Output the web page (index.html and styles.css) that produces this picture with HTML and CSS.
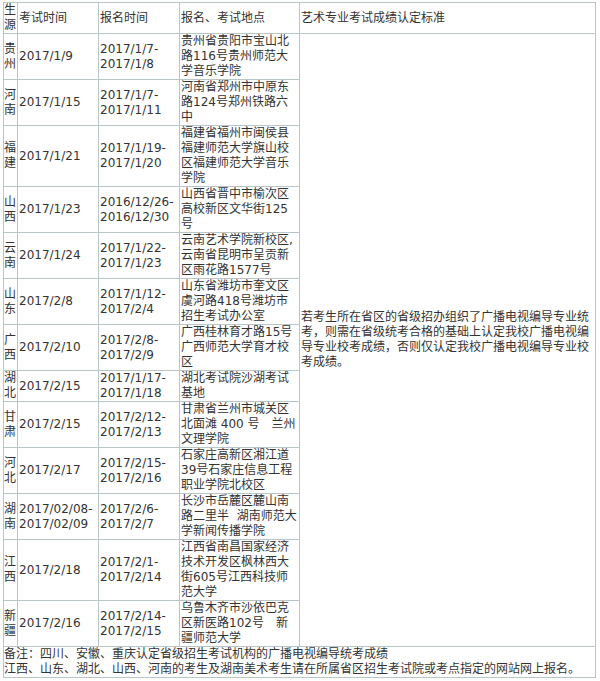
FILE: index.html
```html
<!DOCTYPE html>
<html lang="zh-CN">
<head>
    <meta charset="UTF-8">
    <title>广播电视编导专业考试安排</title>
    <link rel="stylesheet" href="styles.css">
</head>
<body>
<table class="exam-table">
    <colgroup>
        <col class="col-prov">
        <col class="col-date">
        <col class="col-apply">
        <col class="col-place">
        <col class="col-rule">
    </colgroup>
    <thead>
    <tr>
        <th>生源</th>
        <th>考试时间</th>
        <th>报名时间</th>
        <th>报名、考试地点</th>
        <th>艺术专业考试成绩认定标准</th>
    </tr>
    </thead>
    <tbody>
    <tr>
        <td>贵州</td>
        <td>2017/1/9</td>
        <td>2017/1/7-<wbr>2017/1/8</td>
        <td>贵州省贵阳市宝山北路116号贵州师范大学音乐学院</td>
        <td rowspan="13" class="rule">若考生所在省区的省级招办组织了广播电视编导专业统考，则需在省级统考合格的基础上认定我校广播电视编导专业校考成绩，否则仅认定我校广播电视编导专业校考成绩。</td>
    </tr>
    <tr>
        <td>河南</td>
        <td>2017/1/15</td>
        <td>2017/1/7-<wbr>2017/1/11</td>
        <td>河南省郑州市中原东路124号郑州铁路六中</td>
    </tr>
    <tr>
        <td>福建</td>
        <td>2017/1/21</td>
        <td>2017/1/19-<wbr>2017/1/20</td>
        <td>福建省福州市闽侯县福建师范大学旗山校区福建师范大学音乐学院</td>
    </tr>
    <tr>
        <td>山西</td>
        <td>2017/1/23</td>
        <td>2016/12/26-<wbr>2016/12/30</td>
        <td>山西省晋中市榆次区高校新区文华街125号</td>
    </tr>
    <tr>
        <td>云南</td>
        <td>2017/1/24</td>
        <td>2017/1/22-<wbr>2017/1/23</td>
        <td>云南艺术学院新校区,云南省昆明市呈贡新区雨花路1577号</td>
    </tr>
    <tr>
        <td>山东</td>
        <td>2017/2/8</td>
        <td>2017/1/12-<wbr>2017/2/4</td>
        <td>山东省潍坊市奎文区虞河路418号潍坊市招生考试办公室</td>
    </tr>
    <tr>
        <td>广西</td>
        <td>2017/2/10</td>
        <td>2017/2/8-<wbr>2017/2/9</td>
        <td>广西桂林育才路15号广西师范大学育才校区</td>
    </tr>
    <tr>
        <td>湖北</td>
        <td>2017/2/15</td>
        <td>2017/1/17-<wbr>2017/1/18</td>
        <td>湖北考试院沙湖考试基地</td>
    </tr>
    <tr>
        <td>甘肃</td>
        <td>2017/2/15</td>
        <td>2017/2/12-<wbr>2017/2/13</td>
        <td>甘肃省兰州市城关区北面滩 400 号　兰州文理学院</td>
    </tr>
    <tr>
        <td>河北</td>
        <td>2017/2/17</td>
        <td>2017/2/15-<wbr>2017/2/16</td>
        <td>石家庄高新区湘江道39号石家庄信息工程职业学院北校区</td>
    </tr>
    <tr>
        <td>湖南</td>
        <td>2017/02/08-<wbr>2017/02/09</td>
        <td>2017/2/6-<wbr>2017/2/7</td>
        <td>长沙市岳麓区麓山南路二里半&nbsp;&nbsp;湖南师范大学新闻传播学院</td>
    </tr>
    <tr>
        <td>江西</td>
        <td>2017/2/18</td>
        <td>2017/2/1-<wbr>2017/2/14</td>
        <td>江西省南昌国家经济技术开发区枫林西大街605号江西科技师范大学</td>
    </tr>
    <tr>
        <td>新疆</td>
        <td>2017/2/16</td>
        <td>2017/2/14-<wbr>2017/2/15</td>
        <td>乌鲁木齐市沙依巴克区新医路102号　新疆师范大学</td>
    </tr>
    </tbody>
    <tfoot>
    <tr>
        <td colspan="5">备注：四川、安徽、重庆认定省级招生考试机构的广播电视编导统考成绩<br>江西、山东、湖北、山西、河南的考生及湖南美术考生请在所属省区招生考试院或考点指定的网站网上报名。</td>
    </tr>
    </tfoot>
</table>
</body>
</html>
```

FILE: styles.css
```css
*{
    padding: 0;
    margin: 0;
}
body{
    background-color: #fff;
    color: #333;
    font-family: "DejaVu Sans", "Noto Sans CJK SC", sans-serif;
    font-size: 12px;
    line-height: 15px;
}
.exam-table{
    width: 592px;
    margin: 2px 0 0 3px;
    table-layout: fixed;
    border-collapse: collapse;
    border-spacing: 0;
}
.exam-table .col-prov{
    width: 14px;
}
.exam-table .col-date{
    width: 81px;
}
.exam-table .col-apply{
    width: 81px;
}
.exam-table .col-place{
    width: 120px;
}
.exam-table .col-rule{
    width: 296px;
}
.exam-table th,
.exam-table td{
    border: 1px solid #b9c6c8;
    padding: 0 1px;
    text-align: left;
    vertical-align: middle;
    font-weight: normal;
}
.exam-table td:first-child,
.exam-table th:first-child{
    padding: 0;
}
.exam-table tfoot td{
    padding: 0 1px;
}
```
